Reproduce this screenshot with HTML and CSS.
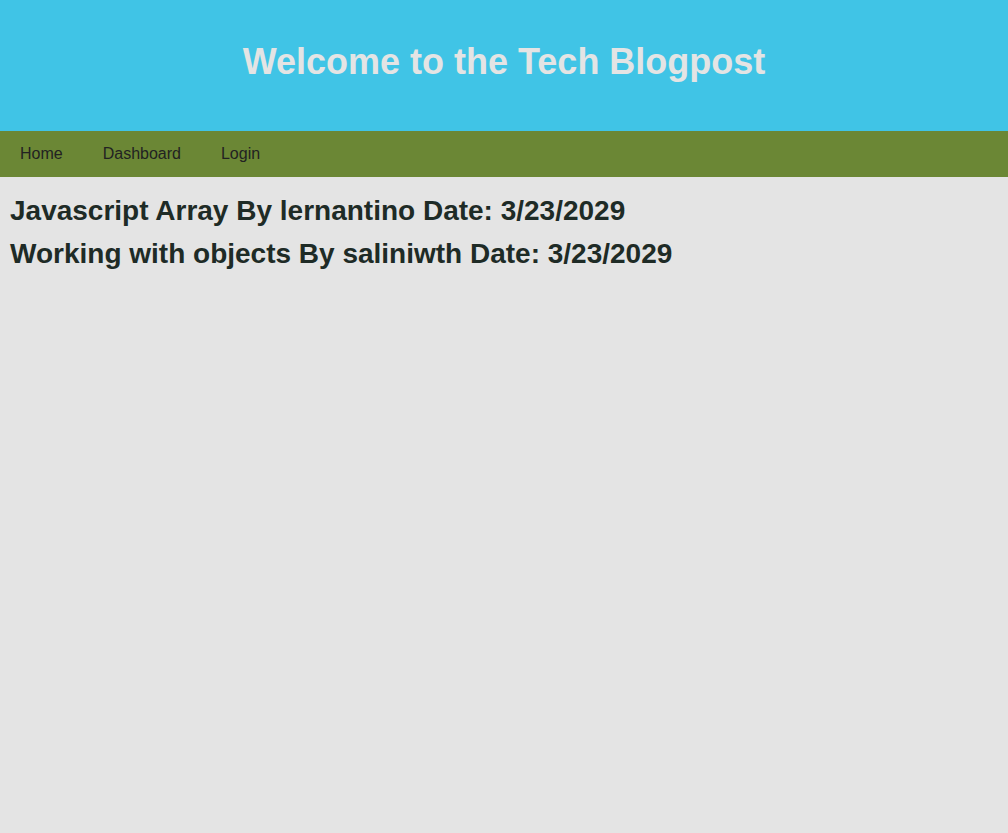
FILE: index.html
```html
<!DOCTYPE html>
<html>
<head>
<meta charset="utf-8">
<link rel="stylesheet" href="styles.css">
</head>
<body>
<header class="banner">
  <h1 class="title">Welcome to the Tech Blogpost</h1>
</header>
<nav class="nav">
  <a class="nav-link" href="#">Home</a>
  <a class="nav-link" href="#">Dashboard</a>
  <a class="nav-link" href="#">Login</a>
</nav>
<main class="posts">
  <h2 class="post">Javascript Array By lernantino Date: 3/23/2029</h2>
  <h2 class="post">Working with objects By saliniwth Date: 3/23/2029</h2>
</main>
</body>
</html>
```
FILE: styles.css
```css
html, body {
  margin: 0;
  padding: 0;
  height: 100%;
}
body {
  background: #e4e4e4;
  font-family: "Liberation Sans", Arial, sans-serif;
}
.banner {
  background: #40c4e6;
  height: 131px;
  display: flex;
  align-items: center;
  justify-content: center;
}
.title {
  margin: 0;
  color: #e4e4e4;
  font-size: 36px;
  font-weight: bold;
  padding-bottom: 8px;
}
.nav {
  background: #6b8735;
  height: 46px;
  display: flex;
  align-items: center;
}
.nav-link {
  color: #222;
  text-decoration: none;
  font-size: 16px;
  padding: 0 20px;
}
.posts {
  padding: 18px 10px;
  display: flex;
  flex-direction: column;
  gap: 11px;
}
.post {
  margin: 0;
  font-family: "Liberation Sans", Arial, sans-serif;
  font-size: 28px;
  font-weight: bold;
  color: #1e2b26;
}
```
